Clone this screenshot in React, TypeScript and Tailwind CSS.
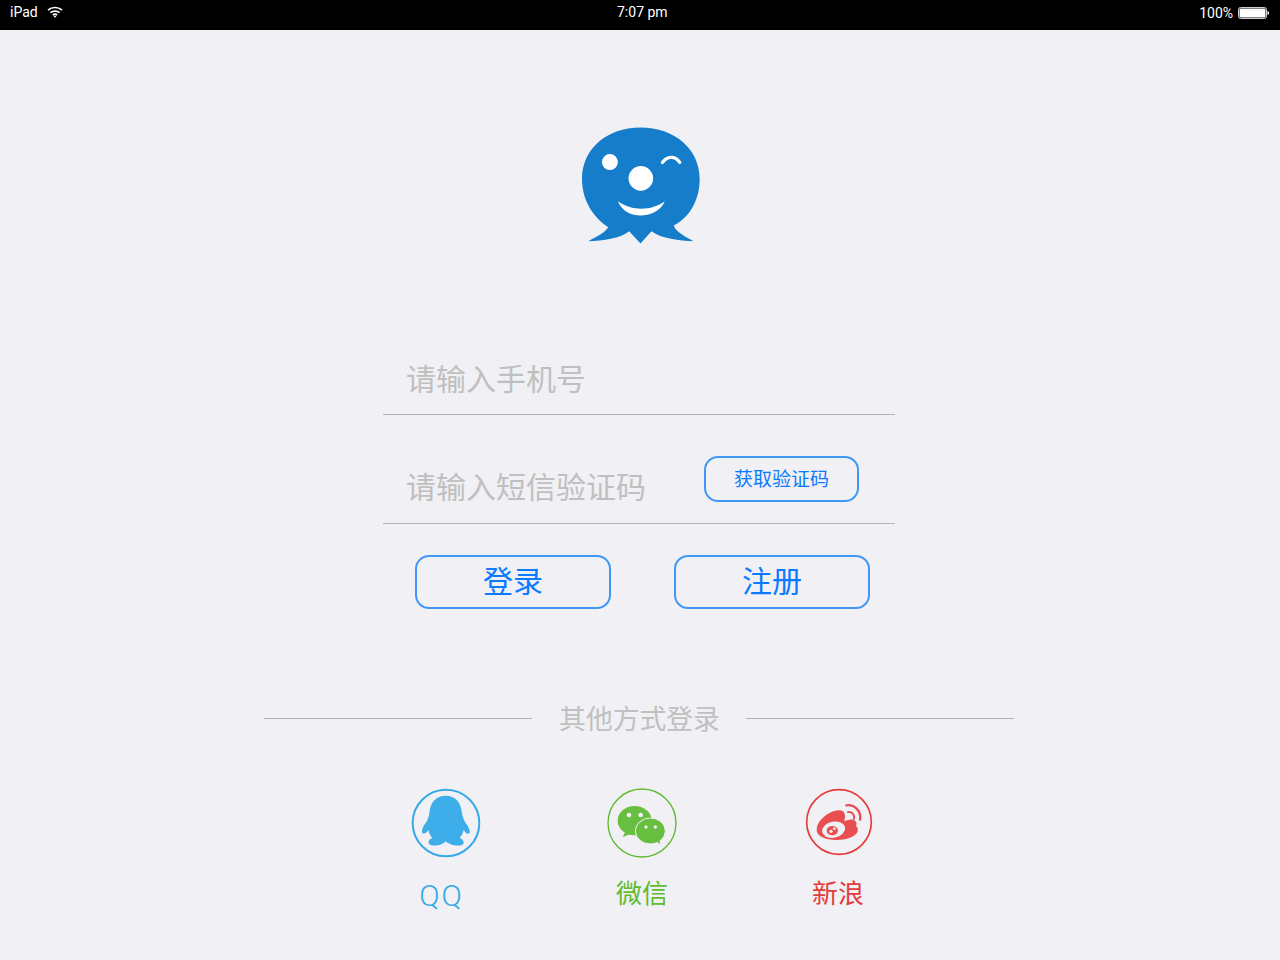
const cjk = "font-['Helvetica_Neue','Noto_Sans_CJK_SC','Liberation_Sans',sans-serif]"

function Wifi() {
  return (
    <svg width="16" height="12" viewBox="0 0 16 12" fill="none" stroke="white" strokeWidth="1.7">
      <path d="M1 4.200C5 .6 11 .6 15 4.200" />
      <path d="M3.400 6.700C6 4.500 10 4.500 12.600 6.700" />
      <path d="M5.800 9C7 8 9 8 10.200 9" />
      <path d="M8 11.800 6.600 10.200C7.400 9.600 8.600 9.600 9.400 10.200Z" fill="white" stroke="none" />
    </svg>
  )
}

function Battery() {
  return (
    <svg width="31" height="12" viewBox="0 0 31 12">
      <rect x="0.5" y="0.5" width="28" height="11" rx="2" fill="none" stroke="#cfcfcf" strokeWidth="1" />
      <rect x="1.500" y="1.500" width="26" height="9" rx="1" fill="white" />
      <path d="M29.500 4c1 .2 1.500 1 1.500 2s-.5 1.800-1.500 2z" fill="white" />
    </svg>
  )
}

function Logo() {
  return (
    <svg width="118" height="117" viewBox="66 49 355 351">
      <path
        fill="#167dcb"
        d="M85 392C105 380 132 370 145 350C100 320 66 270 66 205C66 115 140 50 242 50C345 50 420 115 420 205C420 270 388 322 342 345C348 365 380 380 401 392C360 390 305 385 275 362L242 399L208 362C180 385 130 390 85 392Z"
      />
      <circle cx="150" cy="154" r="24" fill="white" />
      <circle cx="243" cy="203" r="37" fill="white" />
      <path d="M308 155C322 136 346 134 360 155" fill="none" stroke="white" strokeWidth="10" strokeLinecap="round" />
      <path d="M174 272C215 302 275 302 315 272C303 303 268 315 242 315C215 315 186 303 174 272Z" fill="white" />
    </svg>
  )
}

function QQIcon() {
  return (
    <svg width="70" height="70" viewBox="0 0 210 210">
      <circle cx="105" cy="105" r="100" fill="none" stroke="#35a9e8" strokeWidth="6" />
      <path
        fill="#3daeea"
        d="M104 23C76 23 58 43 56 70C54 85 51 95 44 105C36 115 31 127 34 135C40 140 48 133 52 125C54 135 58 143 64 150C51 155 48 167 61 172C76 175 96 170 104 160C114 170 136 175 151 172C164 167 158 155 146 150C152 143 156 135 158 125C162 133 170 141 176 135C178 127 172 115 164 105C158 95 154 85 152 70C150 43 132 23 104 23Z"
      />
    </svg>
  )
}

function WechatIcon() {
  return (
    <svg width="70" height="70" viewBox="0 0 210 210">
      <circle cx="105" cy="105" r="102" fill="none" stroke="#5dbb2c" strokeWidth="4" />
      <ellipse cx="83" cy="98" rx="51" ry="44" fill="#68bf3f" />
      <path d="M56 130 47 147 72 137Z" fill="#68bf3f" />
      <ellipse cx="130" cy="129" rx="45" ry="39" fill="#68bf3f" stroke="#f0f0f5" strokeWidth="3" />
      <path d="M146 158 160 169 156 150Z" fill="#68bf3f" />
      <circle cx="66" cy="81" r="7" fill="#f0f0f5" />
      <circle cx="101" cy="81" r="7" fill="#f0f0f5" />
      <circle cx="117" cy="117" r="5" fill="#f0f0f5" />
      <circle cx="145" cy="117" r="5" fill="#f0f0f5" />
    </svg>
  )
}

function WeiboIcon() {
  return (
    <svg width="68" height="68" viewBox="0 0 204 204">
      <circle cx="102" cy="102" r="97" fill="none" stroke="#e53b3b" strokeWidth="5" />
      <path
        fill="#e94f50"
        d="M35 126C35 105 52 88 72 76C90 66 108 64 116 72C122 79 120 90 118 100C130 94 142 92 150 98C157 104 155 110 152 114C160 118 160 128 155 136C143 150 118 157 92 156C62 155 35 146 35 126Z"
      />
      <ellipse cx="86" cy="125" rx="35" ry="24" fill="#f0f0f5" transform="rotate(-12 86 125)" />
      <ellipse cx="82" cy="128" rx="17" ry="14" fill="#e94f50" />
      <circle cx="88" cy="122" r="4" fill="#f0f0f5" />
      <circle cx="78" cy="130" r="5" fill="#f0f0f5" />
      <path d="M124 52C148 48 170 70 165 95" fill="none" stroke="#e94f50" strokeWidth="7" strokeLinecap="round" />
      <path d="M129 72C140 70 150 80 147 92" fill="none" stroke="#e94f50" strokeWidth="6" strokeLinecap="round" />
    </svg>
  )
}

export default function App() {
  return (
    <div className={`w-[1280px] h-[960px] overflow-hidden bg-[#f0f0f5] ${cjk}`}>
      <div className="relative flex h-[30px] items-center bg-black px-[10px] pb-[6px] font-['Roboto','Liberation_Sans',sans-serif] text-[14px] text-white">
        <span>iPad</span>
        <span className="ml-[9px]">
          <Wifi />
        </span>
        <span className="absolute left-[617px]">7:07 pm</span>
        <div className="ml-auto mr-[1px] flex items-center gap-[5px] pt-[3px]">
          <span>100%</span>
          <span className="mb-[2px]">
            <Battery />
          </span>
        </div>
      </div>

      <div className="ml-[582px] mt-[97px] w-[118px]">
        <Logo />
      </div>

      <div className="ml-[383px] mt-[108px] w-[512px]">
        <div className="flex h-[63px] items-center border-b border-[#b4b4b4] pb-[12px] pl-[23px] text-[30px] leading-none text-[#bfbfbf]">
          请输入手机号
        </div>
        <div className="mt-[41px] flex h-[68px] items-start border-b border-[#b4b4b4] pl-[23px]">
          <span className="mt-[14px] text-[30px] leading-none text-[#bfbfbf]">请输入短信验证码</span>
          <button className="ml-[58px] flex h-[46px] w-[155px] items-center justify-center rounded-[14px] border-2 border-[#4098f5] pb-[3px] text-[19px] leading-none text-[#0a7bff]">
            获取验证码
          </button>
        </div>
      </div>

      <div className="ml-[415px] mt-[31px] flex gap-[63px]">
        <button className="flex h-[54px] w-[196px] items-center justify-center rounded-[14px] border-2 border-[#4098f5] pb-[7px] text-[30px] leading-none text-[#0a7bff]">
          登录
        </button>
        <button className="flex h-[54px] w-[196px] items-center justify-center rounded-[14px] border-2 border-[#4098f5] pb-[7px] text-[30px] leading-none text-[#0a7bff]">
          注册
        </button>
      </div>

      <div className="ml-[264px] mt-[95px] flex h-[28px] w-[750px] items-center justify-between">
        <div className="h-px w-[268px] bg-[#b4b4b4]" />
        <span className="ml-[1px] text-[26.8px] leading-none text-[#c0c0c0]">其他方式登录</span>
        <div className="h-px w-[268px] bg-[#b4b4b4]" />
      </div>

      <div className="ml-[411px] mt-[56px] flex items-start">
        <div className="flex w-[70px] flex-col items-center">
          <QQIcon />
          <span className="mr-[9px] mt-[23px] font-['Roboto','Liberation_Sans',sans-serif] text-[30px] font-light leading-none tracking-[2px] text-[#35a9e8]">
            QQ
          </span>
        </div>
        <div className="ml-[126px] flex w-[70px] flex-col items-center">
          <WechatIcon />
          <span className="mt-[21px] text-[26px] leading-none text-[#5fbb30]">微信</span>
        </div>
        <div className="ml-[128px] flex w-[68px] flex-col items-center">
          <WeiboIcon />
          <span className="mr-[2px] mt-[23px] text-[26px] leading-none text-[#e53b3b]">新浪</span>
        </div>
      </div>
    </div>
  )
}
